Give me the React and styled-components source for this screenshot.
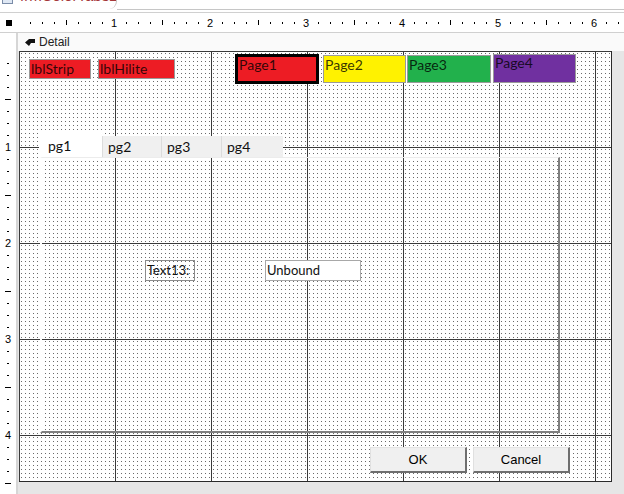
import React from "react";
import styled, { createGlobalStyle } from "styled-components";

const GlobalStyle = createGlobalStyle`
  html, body {
    margin: 0;
    padding: 0;
    background: #fff;
  }
  body {
    font-family: Lato, "Liberation Sans", sans-serif;
  }
  #root {
    width: 624px;
    height: 494px;
    overflow: hidden;
  }
`;

const Frame = styled.div`
  width: 624px;
  height: 494px;
  display: flex;
  flex-direction: column;
  background: #fff;
`;

const TopStrip = styled.div`
  display: flex;
  height: 12px;
  flex-shrink: 0;
`;

const DocIcon = styled.div`
  width: 9px;
  height: 3px;
  margin: 0 3px 0 2px;
  border: 1px solid #7a8ca8;
  border-top: none;
  background: #dfe8f4;
`;

const DocTab = styled.div`
  width: 100px;
  height: 9px;
  overflow: hidden;
  border-right: 1px solid #c6c6c6;
  border-bottom-right-radius: 8px;
`;

const DocTitle = styled.div`
  margin-top: -12px;
  padding-left: 4px;
  font-family: "Liberation Sans", sans-serif;
  font-size: 15px;
  line-height: 16px;
  color: #a4373a;
`;

const TopLine = styled.div`
  flex: 1;
  height: 9px;
  border-bottom: 1px solid #c6c6c6;
`;

const RulerRow = styled.div`
  display: flex;
  height: 21px;
  flex-shrink: 0;
  box-sizing: border-box;
  border-top: 1px solid #d0d0d0;
  border-bottom: 1px solid #d0d0d0;
`;

const Corner = styled.div`
  width: 18px;
  display: flex;
  align-items: center;
  justify-content: center;
`;

const CornerSquare = styled.div`
  width: 6px;
  height: 6px;
  background: #000;
`;

const HTrack = styled.div`
  display: flex;
  padding-left: 6px;
  overflow: hidden;
`;

const HCell = styled.div`
  width: 12px;
  flex-shrink: 0;
  display: flex;
  align-items: center;
  justify-content: center;
  font-family: "Liberation Sans", sans-serif;
  font-size: 11px;
  color: #000;
`;

const HTick = styled.div`
  width: 1px;
  height: ${(p) => (p.$long ? 5 : 2)}px;
  background: #000;
`;

const Main = styled.div`
  flex: 1;
  display: flex;
  min-height: 0;
`;

const VRuler = styled.div`
  width: 16px;
  flex-shrink: 0;
  padding-top: 12px;
  border-right: 2px solid #d6d6d6;
  background: #fff;
  overflow: hidden;
`;

const VCell = styled.div`
  height: 12px;
  display: flex;
  align-items: center;
  justify-content: center;
  font-family: "Liberation Sans", sans-serif;
  font-size: 11px;
  color: #000;
`;

const VTick = styled.div`
  width: ${(p) => (p.$long ? 6 : 2)}px;
  height: 1px;
  background: #000;
`;

const RightCol = styled.div`
  flex: 1;
  display: flex;
  flex-direction: column;
  background: #e6e6e6;
`;

const DetailBar = styled.div`
  height: 18px;
  flex-shrink: 0;
  display: flex;
  align-items: center;
  gap: 4px;
  padding-left: 7px;
  background: #fafafa;
  font-family: "Liberation Sans", sans-serif;
  font-size: 12px;
  color: #222;
`;

const CanvasRow = styled.div`
  display: flex;
  padding-left: 1px;
`;

const Canvas = styled.div`
  position: relative;
  width: 592px;
  height: 430px;
  flex-shrink: 0;
  border-right: 1px solid #2a2a2a;
  border-bottom: 1px solid #2a2a2a;
  background-color: #fff;
  background-image: linear-gradient(90deg, #3a3a3a 1px, transparent 1px),
    linear-gradient(#3a3a3a 1px, transparent 1px),
    conic-gradient(at 1px 1px, transparent 75%, #6a6a6a 0);
  background-size: 96px 100%, 100% 96px, 4px 4px;
  background-position: 0 0, 0 0, 2px 2px;
`;

const Placed = styled.div`
  position: absolute;
  left: ${(p) => p.$x}px;
  top: ${(p) => p.$y}px;
  width: ${(p) => p.$w}px;
  height: ${(p) => p.$h}px;
  box-sizing: border-box;
`;

const ColorLabel = styled(Placed)`
  background: ${(p) => p.$bg};
  border: ${(p) => (p.$thick ? "3px solid #000" : "1px solid #9a9a9a")};
  color: rgba(0, 0, 0, 0.8);
  font-size: 14px;
  line-height: ${(p) => (p.$lh ? p.$lh : 18)}px;
  padding: 0 1px;
  white-space: nowrap;
  overflow: hidden;
`;

const PlainLabel = styled(Placed)`
  border: 1px solid #8c8c8c;
  background: ${(p) => (p.$box ? "#fff" : "transparent")};
  border-color: ${(p) => (p.$box ? "#a8a8a8" : "#8c8c8c")};
  color: #111;
  font-size: 13px;
  line-height: 18px;
  padding: 0 1px;
`;

const Button = styled(Placed)`
  display: flex;
  align-items: center;
  justify-content: center;
  background: #f0f0f0;
  border-top: 1px solid #e4e4e4;
  border-left: 1px solid #e0e0e0;
  border-right: 2px solid #6e6e6e;
  border-bottom: 2px solid #6e6e6e;
  font-family: "Liberation Sans", sans-serif;
  font-size: 13px;
  color: #000;
`;

const TabControl = styled(Placed)`
  display: flex;
  flex-direction: column;
`;

const TabRow = styled.div`
  display: flex;
  align-items: flex-end;
  height: 24px;
  flex-shrink: 0;
`;

const Tab = styled.div`
  width: ${(p) => p.$w}px;
  height: ${(p) => (p.$active ? 24 : 21)}px;
  box-sizing: border-box;
  display: flex;
  align-items: center;
  padding-left: ${(p) => (p.$active ? 8 : 5)}px;
  background: ${(p) => (p.$active ? "#fff" : "#f0f0f0")};
  border-left: 1px solid ${(p) => (p.$active ? "#fff" : "#dcdcdc")};
  font-size: 14px;
  color: #111;
`;

const TabPage = styled.div`
  flex: 1;
  margin-left: 1px;
  border-left: 2px solid #fff;
  border-top: 1px solid #ececec;
  border-right: 2px solid #808080;
  border-bottom: 2px solid #808080;
`;

const Filler = styled.div`
  flex: 1;
`;

const SectionIcon = () => (
  <svg width="10" height="9" viewBox="0 0 10 9">
    <path d="M0 4.5 L4 1 L10 1 L10 5 L6 5 L4 8 Z" fill="#111" />
  </svg>
);

const hCells = Array.from({ length: 50 }, (_, i) => i + 1);
const vCells = Array.from({ length: 38 }, (_, i) => i);

const HMark = ({ i }) => {
  if (i % 8 === 0) return <HCell>{i / 8}</HCell>;
  return (
    <HCell>
      <HTick $long={i % 4 === 0} />
    </HCell>
  );
};

const VMark = ({ i }) => {
  if (i === 0) return <VCell />;
  if (i % 8 === 0) return <VCell>{i / 8}</VCell>;
  return (
    <VCell>
      <VTick $long={i % 4 === 0} />
    </VCell>
  );
};

const pages = [
  { text: "Page1", x: 216, y: 3, w: 84, h: 30, bg: "#ed1c24", thick: true, lh: 16 },
  { text: "Page2", x: 304, y: 4, w: 83, h: 28, bg: "#fff200", lh: 17 },
  { text: "Page3", x: 388, y: 4, w: 84, h: 28, bg: "#22b14c", lh: 17 },
  { text: "Page4", x: 474, y: 3, w: 83, h: 29, bg: "#7030a0", lh: 15 },
];

const tabs = [
  { name: "pg1", w: 63, active: true },
  { name: "pg2", w: 59 },
  { name: "pg3", w: 60 },
  { name: "pg4", w: 62 },
];

const App = () => {
  return (
    <Frame>
      <GlobalStyle />
      <TopStrip>
        <DocIcon />
        <DocTab>
          <DocTitle>frmColorTabs2</DocTitle>
        </DocTab>
        <TopLine />
      </TopStrip>

      <RulerRow>
        <Corner>
          <CornerSquare />
        </Corner>
        <HTrack>
          {hCells.map((i) => (
            <HMark key={i} i={i} />
          ))}
        </HTrack>
      </RulerRow>

      <Main>
        <VRuler>
          {vCells.map((i) => (
            <VMark key={i} i={i} />
          ))}
        </VRuler>
        <RightCol>
          <DetailBar>
            <SectionIcon />
            Detail
          </DetailBar>
          <CanvasRow>
            <Canvas>
              <ColorLabel $x={10} $y={8} $w={62} $h={20} $bg="#ed1c24">
                lblStrip
              </ColorLabel>
              <ColorLabel $x={79} $y={8} $w={77} $h={20} $bg="#ed1c24">
                lblHilite
              </ColorLabel>
              {pages.map((p) => (
                <ColorLabel
                  key={p.text}
                  $x={p.x}
                  $y={p.y}
                  $w={p.w}
                  $h={p.h}
                  $bg={p.bg}
                  $thick={p.thick}
                  $lh={p.lh}
                >
                  {p.text}
                </ColorLabel>
              ))}

              <TabControl $x={20} $y={82} $w={521} $h={300}>
                <TabRow>
                  {tabs.map((t) => (
                    <Tab key={t.name} $w={t.w} $active={t.active}>
                      {t.name}
                    </Tab>
                  ))}
                </TabRow>
                <TabPage />
              </TabControl>

              <PlainLabel $x={126} $y={209} $w={50} $h={21}>
                Text13:
              </PlainLabel>
              <PlainLabel $x={246} $y={209} $w={96} $h={21} $box>
                Unbound
              </PlainLabel>

              <Button $x={351} $y={396} $w={97} $h={26}>
                OK
              </Button>
              <Button $x={454} $y={396} $w={97} $h={26}>
                Cancel
              </Button>
            </Canvas>
            <Filler />
          </CanvasRow>
        </RightCol>
      </Main>
    </Frame>
  );
};

export default App;
